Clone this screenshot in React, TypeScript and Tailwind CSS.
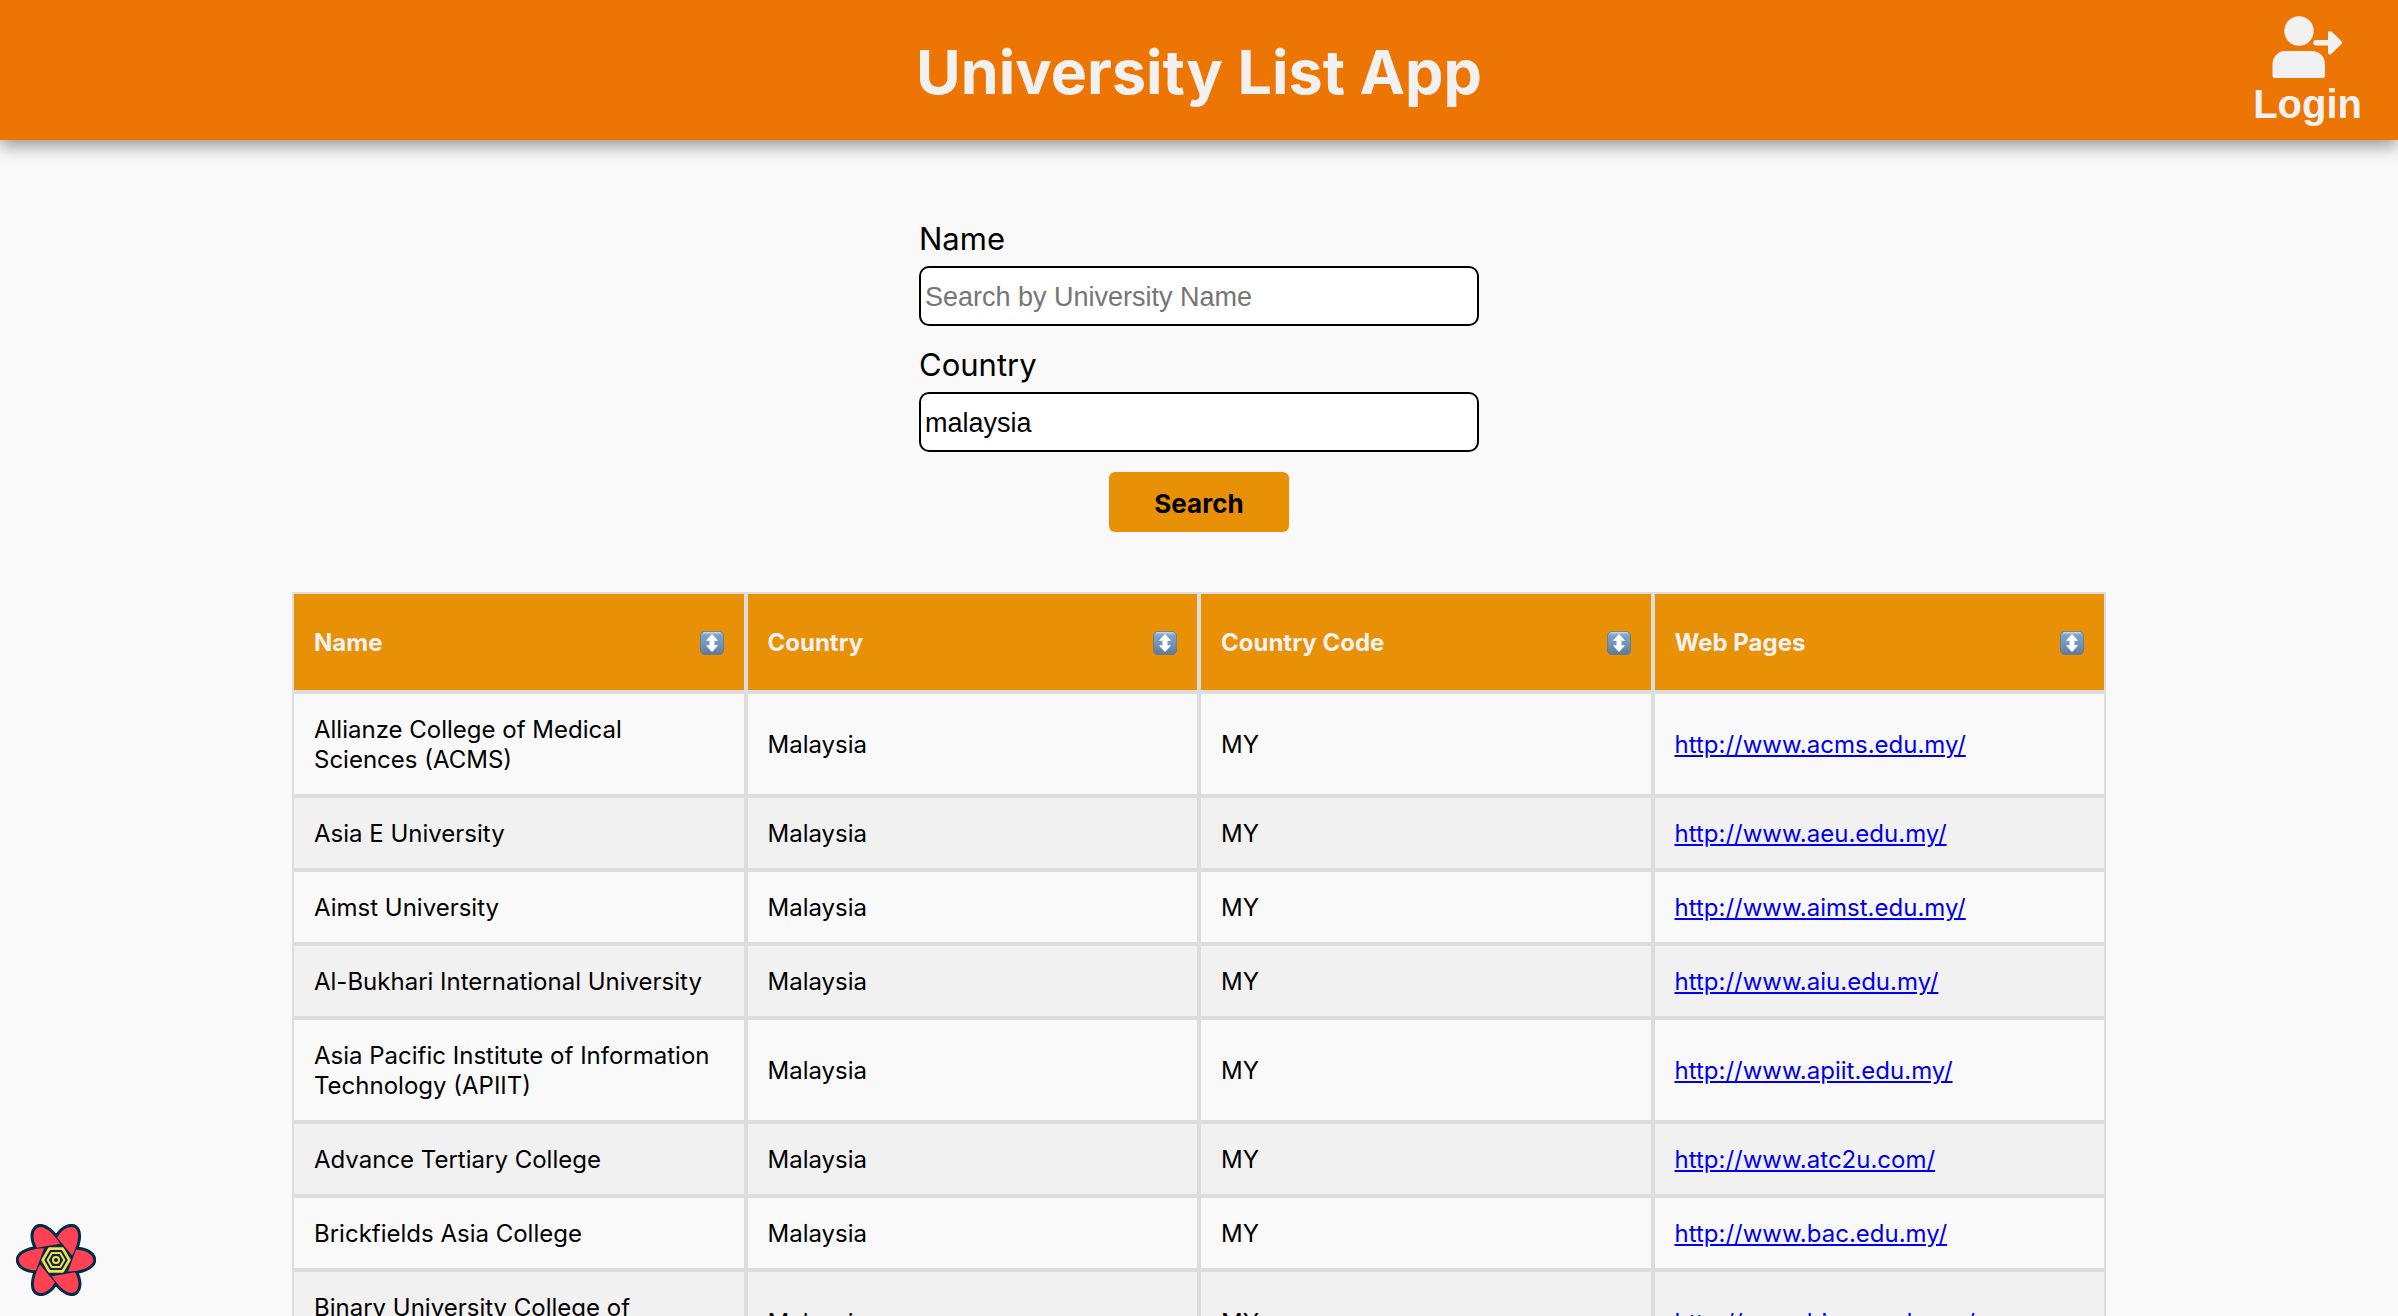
import { useState } from "react";

type University = { name: string; country: string; code: string; url: string };

const universities: University[] = [
  { name: "Allianze College of Medical Sciences (ACMS)", country: "Malaysia", code: "MY", url: "http://www.acms.edu.my/" },
  { name: "Asia E University", country: "Malaysia", code: "MY", url: "http://www.aeu.edu.my/" },
  { name: "Aimst University", country: "Malaysia", code: "MY", url: "http://www.aimst.edu.my/" },
  { name: "Al-Bukhari International University", country: "Malaysia", code: "MY", url: "http://www.aiu.edu.my/" },
  { name: "Asia Pacific Institute of Information Technology (APIIT)", country: "Malaysia", code: "MY", url: "http://www.apiit.edu.my/" },
  { name: "Advance Tertiary College", country: "Malaysia", code: "MY", url: "http://www.atc2u.com/" },
  { name: "Brickfields Asia College", country: "Malaysia", code: "MY", url: "http://www.bac.edu.my/" },
  { name: "Binary University College of Management & Entrepreneurship", country: "Malaysia", code: "MY", url: "http://www.binary.edu.my/" },
];

const columns = ["Name", "Country", "Country Code", "Web Pages"];

function LoginIcon() {
  return (
    <svg viewBox="0 0 72 64" className="h-16 w-18" fill="currentColor" aria-hidden="true">
      <circle cx="27" cy="15" r="14.7" />
      <path d="M13 35h27a13 13 0 0 1 13 13v12a2 2 0 0 1-2 2H2.500a2 2 0 0 1-2-2V48a13 13 0 0 1 12.500-13z" />
      <path d="M44 24h12v-7a2 2 0 0 1 3.500-1.400l10 9.700a2 2 0 0 1 0 2.800l-10 9.700A2 2 0 0 1 56 36.400V29.500H44a2.750 2.750 0 0 1 0-5.500z" />
    </svg>
  );
}

function SortIcon() {
  return (
    <svg viewBox="0 0 24 24" className="size-6 shrink-0" aria-hidden="true">
      <defs>
        <linearGradient id="sort-face" x1="0" y1="0" x2="0" y2="1">
          <stop offset="0" stopColor="#a3c0dc" />
          <stop offset="0.2" stopColor="#7ba1c7" />
          <stop offset="0.55" stopColor="#7394b9" />
          <stop offset="1" stopColor="#5b7a9b" />
        </linearGradient>
      </defs>
      <rect x="0.400" y="0.400" width="23.200" height="23.200" rx="4.500" fill="url(#sort-face)" stroke="#5f7789" strokeWidth="0.800" />
      <path d="M4 1.800h16" stroke="#cfe0ee" strokeWidth="1" strokeLinecap="round" />
      <path d="M12 3l6.200 6.800h-3.700v4.400h3.700L12 21l-6.200-6.800h3.700V9.800H5.800z" fill="#fff" />
    </svg>
  );
}

const PETAL = "M-36 -35C-72 -34 -111 -22 -112 0C-110 20 -86 31 -60 31Z";
const TURNS = [0, 60, 120, 180, 240, 300];

function FlowerLogo() {
  return (
    <svg viewBox="-120 -108 240 216" className="h-18 w-20" aria-hidden="true">
      <g fill="#002c4b" stroke="#002c4b" strokeWidth="18" strokeLinejoin="round">
        {TURNS.map((t) => (
          <path key={t} d={PETAL} transform={`rotate(${t})`} />
        ))}
        <path d="M-48 0L-24 -41H24L48 0L24 41H-24Z" />
      </g>
      <g fill="#ff4154">
        {TURNS.map((t) => (
          <path key={t} d={PETAL} transform={`rotate(${t})`} />
        ))}
      </g>
      <g fill="none" stroke="#ffd94c" strokeLinejoin="round">
        <path d="M-40 0L-20 -34H20L40 0L20 34H-20Z" strokeWidth="8" />
        <path d="M-25 0L-12.500 -21H12.500L25 0L12.500 21H-12.500Z" strokeWidth="6" />
        <circle r="9" strokeWidth="6" />
      </g>
    </svg>
  );
}

type FieldProps = {
  id: string;
  label: string;
  value: string;
  placeholder: string;
  onChange: (value: string) => void;
};

function Field({ id, label, value, placeholder, onChange }: FieldProps) {
  return (
    <div className="flex flex-col">
      <label htmlFor={id} className="mb-2 text-[31px] leading-[38px]">
        {label}
      </label>
      <input
        id={id}
        type="text"
        value={value}
        placeholder={placeholder}
        onChange={(e) => onChange(e.target.value)}
        className="h-15 w-full rounded-[10px] border-2 border-black bg-white px-1 pt-0.5 font-['Liberation_Sans',Arial,sans-serif] text-[27px] text-black placeholder:text-[#757575]"
      />
    </div>
  );
}

export default function App() {
  const [name, setName] = useState("");
  const [country, setCountry] = useState("malaysia");

  return (
    <div className="h-screen overflow-hidden bg-[#f9f9f9] font-[Inter,sans-serif] text-black">
      <header className="grid h-35 grid-cols-[1fr_auto_1fr] items-center bg-[#ed7504] px-9 pt-1 text-[#f1f1f1] shadow-[0_6px_16px_rgba(0,0,0,0.4)]">
        <h1 className="col-start-2 text-[61px] leading-none font-bold">University List App</h1>
        <button
          type="button"
          className="flex cursor-pointer flex-col items-center justify-self-end font-['Liberation_Sans',Arial,sans-serif] text-[40px] leading-12 font-bold"
        >
          <LoginIcon />
          Login
        </button>
      </header>

      <main>
        <form
          className="mx-auto mt-20 flex w-140 max-w-full flex-col gap-5"
          onSubmit={(e) => e.preventDefault()}
        >
          <Field id="name" label="Name" value={name} placeholder="Search by University Name" onChange={setName} />
          <Field id="country" label="Country" value={country} placeholder="Search by Country" onChange={setCountry} />
          <button
            type="submit"
            className="h-15 w-45 cursor-pointer self-center rounded-md bg-[#e89107] pt-0.5 text-[26px] font-bold"
          >
            Search
          </button>
        </form>

        <div className="mt-15 px-[292px]">
          <table className="w-full table-fixed border-separate border-spacing-0 text-left text-2xl leading-[30px]">
            <thead>
              <tr>
                {columns.map((column) => (
                  <th
                    key={column}
                    scope="col"
                    className="h-25 border-2 border-[#ddd] bg-[#e89107] px-5 pt-0.5 font-bold text-[#f1f1f1]"
                  >
                    <button type="button" className="flex w-full cursor-pointer items-center justify-between">
                      {column}
                      <SortIcon />
                    </button>
                  </th>
                ))}
              </tr>
            </thead>
            <tbody>
              {universities.map((u) => (
                <tr key={u.url} className="even:bg-[#f1f1f1]">
                  <td className="border-2 border-[#ddd] px-5 pt-[21px] pb-[19px]">{u.name}</td>
                  <td className="border-2 border-[#ddd] px-5 pt-[21px] pb-[19px]">{u.country}</td>
                  <td className="border-2 border-[#ddd] px-5 pt-[21px] pb-[19px]">{u.code}</td>
                  <td className="border-2 border-[#ddd] px-5 pt-[21px] pb-[19px]">
                    <a href={u.url} className="text-[#0000ee] underline">
                      {u.url}
                    </a>
                  </td>
                </tr>
              ))}
            </tbody>
          </table>
        </div>
      </main>

      <button type="button" aria-label="Open query devtools" className="fixed bottom-5 left-4 cursor-pointer">
        <FlowerLogo />
      </button>
    </div>
  );
}
